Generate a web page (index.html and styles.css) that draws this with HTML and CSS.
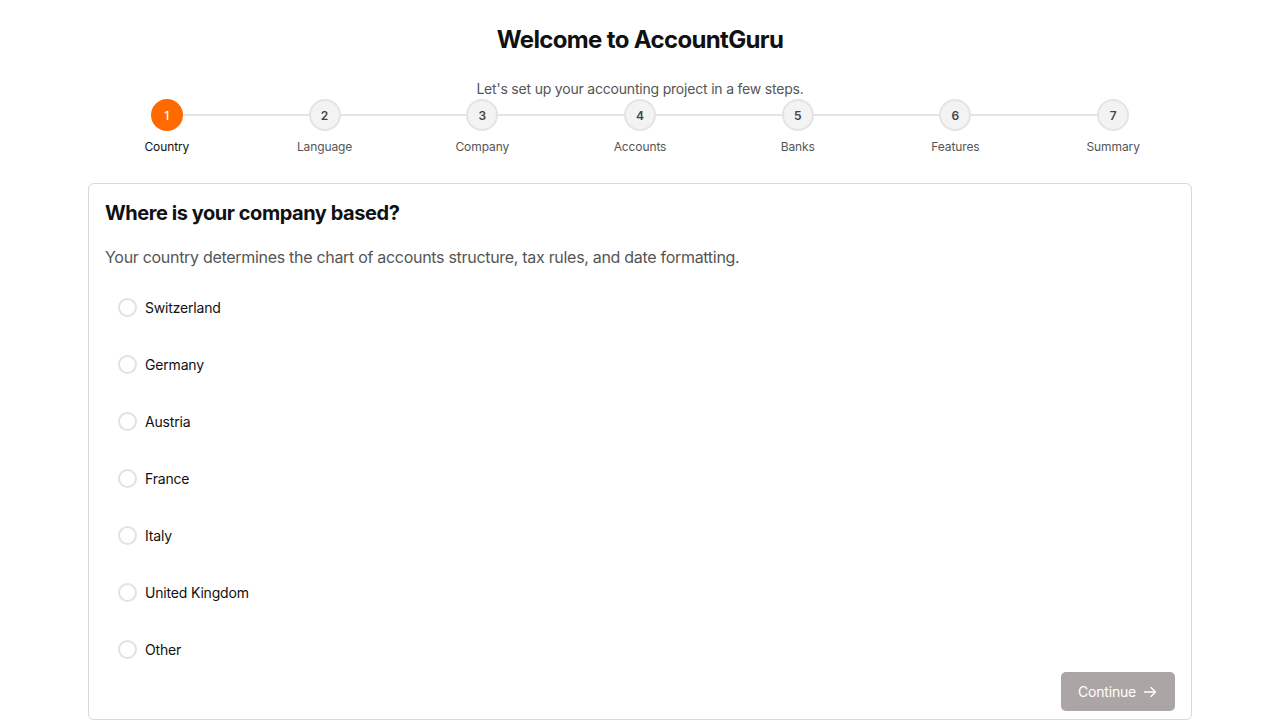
FILE: index.html
```html
<!DOCTYPE html>
<html lang="en">
  <head>
    <meta charset="UTF-8">
    <title>AccountGuru Setup</title>
    <link rel="stylesheet" href="styles.css">
  </head>
  <body>
    <div class="wrap">
      <h1 class="title">Welcome to AccountGuru</h1>
      <p class="subtitle">Let's set up your accounting project in a few steps.</p>

      <ol class="steps">
        <li class="step active"><span class="dot">1</span><span class="label">Country</span></li>
        <li class="step"><span class="dot">2</span><span class="label">Language</span></li>
        <li class="step"><span class="dot">3</span><span class="label">Company</span></li>
        <li class="step"><span class="dot">4</span><span class="label">Accounts</span></li>
        <li class="step"><span class="dot">5</span><span class="label">Banks</span></li>
        <li class="step"><span class="dot">6</span><span class="label">Features</span></li>
        <li class="step"><span class="dot">7</span><span class="label">Summary</span></li>
      </ol>

      <div class="card">
        <h2>Where is your company based?</h2>
        <p class="desc">Your country determines the chart of accounts structure, tax rules, and date formatting.</p>

        <div class="options">
          <label class="option"><span class="radio"></span>Switzerland</label>
          <label class="option"><span class="radio"></span>Germany</label>
          <label class="option"><span class="radio"></span>Austria</label>
          <label class="option"><span class="radio"></span>France</label>
          <label class="option"><span class="radio"></span>Italy</label>
          <label class="option"><span class="radio"></span>United Kingdom</label>
          <label class="option"><span class="radio"></span>Other</label>
        </div>

        <div class="actions">
          <button class="btn" disabled>
            Continue
            <svg width="16" height="16" viewBox="0 0 16 16" fill="none" stroke="currentColor" stroke-width="1.3" stroke-linecap="round" stroke-linejoin="round"><path d="M2.5 8h11M9 3.5 13.5 8 9 12.5"/></svg>
          </button>
        </div>
      </div>
    </div>
  </body>
</html>
```

FILE: styles.css
```css
body {
  margin: 0;
  font-family: Inter, "Noto Sans", sans-serif;
  color: #111;
  background: #fff;
}
.wrap {
  width: 1104px;
  margin: 0 auto;
  padding-top: 24px;
}
.title {
  margin: 0;
  text-align: center;
  font-size: 24px;
  line-height: 32px;
  font-weight: 700;
  letter-spacing: -0.65px;
}
.subtitle {
  margin: 23px 0 0;
  text-align: center;
  font-size: 14px;
  line-height: 20px;
  color: #555;
  letter-spacing: -0.2px;
}
.steps {
  list-style: none;
  margin: 0;
  padding: 0;
  display: grid;
  grid-template-columns: repeat(7, 1fr);
}
.step {
  position: relative;
  display: flex;
  flex-direction: column;
  align-items: center;
}
/* connector line to the next step */
.step:not(:last-child)::after {
  content: "";
  position: absolute;
  top: 15px;
  left: 50%;
  width: 100%;
  height: 2px;
  background: #e4e4e4;
  z-index: 0;
}
.dot {
  position: relative;
  z-index: 1;
  box-sizing: border-box;
  width: 32px;
  height: 32px;
  border-radius: 50%;
  border: 2px solid #e4e4e4;
  background: #f3f3f3;
  color: #444;
  font-size: 12px;
  font-weight: 600;
  display: flex;
  align-items: center;
  justify-content: center;
}
.step.active .dot {
  background: #ff6a00;
  border-color: #ff6a00;
  color: #fff;
  font-weight: 500;
}
.label {
  margin-top: 8px;
  font-size: 12px;
  line-height: 16px;
  color: #555;
  letter-spacing: -0.1px;
}
.step.active .label {
  color: #111;
}
.card {
  margin-top: 28px;
  border: 1px solid #d9d9d9;
  border-radius: 6px;
  padding: 16px 16px 8px;
}
.card h2 {
  margin: 0;
  font-size: 20px;
  line-height: 26px;
  font-weight: 700;
  letter-spacing: -0.45px;
}
.desc {
  margin: 19px 0 0;
  font-size: 16px;
  line-height: 24px;
  color: #555;
  letter-spacing: -0.3px;
}
.options {
  margin-top: 18px;
  display: flex;
  flex-direction: column;
  gap: 17px;
}
.option {
  display: flex;
  align-items: center;
  height: 40px;
  padding-left: 13px;
  font-size: 14px;
  color: #111;
  letter-spacing: -0.18px;
}
.radio {
  box-sizing: border-box;
  width: 19px;
  height: 19px;
  border-radius: 50%;
  border: 2px solid #e2e2e2;
  background: #fff;
  margin-right: 8px;
}
.actions {
  display: flex;
  justify-content: flex-end;
  margin-top: 3px;
}
.btn {
  display: flex;
  align-items: center;
  gap: 6px;
  height: 39px;
  padding: 0 17px;
  border: none;
  border-radius: 5px;
  background: #aca5a5;
  color: #fff;
  font-family: Inter, "Noto Sans", sans-serif;
  font-size: 14px;
  letter-spacing: -0.2px;
}
```
